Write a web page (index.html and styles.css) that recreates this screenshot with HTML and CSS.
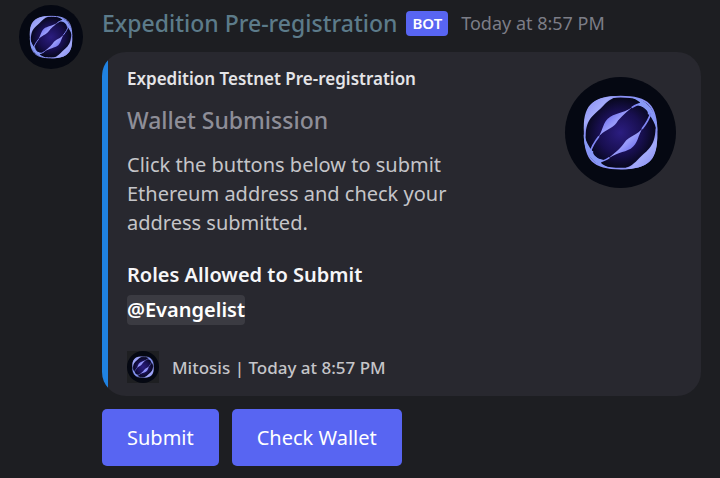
FILE: index.html
```html
<!DOCTYPE html>
<html lang="en">
<head>
    <meta charset="UTF-8">
    <meta name="viewport" content="width=device-width, initial-scale=1.0">
    <title>Expedition Pre-registration</title>
    <link rel="stylesheet" href="styles.css">
</head>
<body>
    <!-- logo, used by the avatar, thumbnail and footer -->
    <svg class="defs" aria-hidden="true">
        <defs>
            <radialGradient id="core">
                <stop offset="0" stop-color="#2b1d80" />
                <stop offset="0.6" stop-color="#180f50" />
                <stop offset="1" stop-color="#060719" />
            </radialGradient>
            <linearGradient id="band" x1="0" y1="0" x2="1" y2="1">
                <stop offset="0" stop-color="#8488ee" />
                <stop offset="0.35" stop-color="#a3aafa" />
                <stop offset="0.55" stop-color="#6a70e2" />
                <stop offset="1" stop-color="#9aaafc" />
            </linearGradient>
            <linearGradient id="leaf" x1="0" y1="0" x2="1" y2="1">
                <stop offset="0.2" stop-color="#6462ea" />
                <stop offset="0.5" stop-color="#999cfa" />
                <stop offset="0.8" stop-color="#625fe6" />
            </linearGradient>
            <g id="half">
                <path fill="url(#band)" d="M57 165 C53 88 78 56 170 57 C145 60 130 70 115 86 C103 99 92 106 80 120 C68 134 63 150 61 180 Z" />
                <path fill="url(#leaf)" d="M98 183 C116 158 112 134 136 119 C158 107 180 108 210 84 C182 108 166 120 155 137 C141 157 116 158 98 183 Z" />
                <path fill="none" stroke="#7f85f4" stroke-width="5" d="M76 226 C80 208 88 196 102 178 M200 92 C212 84 220 80 232 80 C246 81 253 92 251 112" />
                <path fill="#8798f6" d="M196 60 C240 64 276 95 277 162 C270 142 262 124 251 112 C248 98 234 88 212 84 C220 81 225 79 225 76 C218 70 208 65 196 60 Z" />
                <path fill="#0b0b30" d="M214 88 C238 86 246 98 244 122 C240 100 230 92 214 88 Z" />
            </g>
            <symbol id="logo" viewBox="0 0 333 333">
                <circle cx="166" cy="167" r="108" fill="url(#core)" />
                <path fill="none" stroke="#8b91f6" stroke-width="5" d="M167 59 C249 59 275 85 275 167 C275 249 249 275 167 275 C85 275 59 249 59 167 C59 85 85 59 167 59 Z" />
                <use href="#half" />
                <use href="#half" transform="rotate(180 166.5 167)" />
            </symbol>
        </defs>
    </svg>

    <article class="message">
        <svg class="avatar" role="img" aria-label="Mitosis"><use href="#logo" /></svg>
        <div class="content">
            <header class="header">
                <span class="username">Expedition Pre-registration</span>
                <span class="bot-tag">BOT</span>
                <time class="timestamp">Today at 8:57 PM</time>
            </header>
            <section class="embed">
                <div class="embed-body">
                    <div class="embed-text">
                        <p class="embed-author">Expedition Testnet Pre-registration</p>
                        <h2 class="embed-title">Wallet Submission</h2>
                        <p class="embed-description">Click the buttons below to submit Ethereum address and check your address submitted.</p>
                        <h3 class="field-name">Roles Allowed to Submit</h3>
                        <p class="field-value"><span class="mention">@Evangelist</span></p>
                    </div>
                    <svg class="thumbnail" role="img" aria-label="Mitosis"><use href="#logo" /></svg>
                </div>
                <footer class="embed-footer">
                    <span class="footer-icon"><svg class="footer-logo" aria-hidden="true"><use href="#logo" /></svg></span>
                    <span>Mitosis | Today at 8:57 PM</span>
                </footer>
            </section>
            <div class="buttons">
                <button type="button" class="btn">Submit</button>
                <button type="button" class="btn">Check Wallet</button>
            </div>
        </div>
    </article>
</body>
</html>
```
FILE: styles.css
```css
* {
  box-sizing: border-box;
}

body {
  margin: 0;
  background-color: #1d1e22;
  color: #c5c5c9;
  font-family: "Noto Sans", "Open Sans", sans-serif;
  font-size: 20px;
  line-height: 29px;
}

p, h2, h3 {
  margin: 0;
}

.defs {
  position: absolute;
  width: 0;
  height: 0;
}

.message {
  display: flex;
  gap: 19px;
  padding: 5px 19px 12px;
}

.avatar, .thumbnail, .footer-logo {
  display: block;
  flex: none;
  background-color: #050812;
  border-radius: 50%;
}

.avatar {
  width: 64px;
  height: 64px;
}

.content {
  flex: 1;
  min-width: 0;
}

/* Name row */
.header {
  display: flex;
  align-items: center;
  height: 36px;
}

.username {
  color: #5c7b8a;
  font-size: 23px;
  font-weight: 500;
}

.bot-tag {
  margin-left: 9px;
  padding: 0 6px;
  border-radius: 4px;
  background-color: #5865f2;
  color: #ffffff;
  font-size: 15px;
  font-weight: 600;
  line-height: 25px;
}

.timestamp {
  margin-left: 13px;
  color: #7c7d87;
  font-size: 18px;
}

/* Embed card */
.embed {
  position: relative;
  margin-top: 11px;
  padding: 12px 25px 13px;
  border-radius: 24px;
  background-color: #28282f;
  overflow: hidden;
}

.embed::before {
  content: "";
  position: absolute;
  top: 0;
  bottom: 0;
  left: 0;
  width: 6px;
  background-color: #1f82e2;
}

.embed-body {
  display: flex;
  justify-content: space-between;
}

.embed-text {
  max-width: 350px;
}

.embed-author {
  color: #e4e4e7;
  font-size: 17px;
  font-weight: 600;
}

.embed-title {
  margin-top: 13px;
  color: #8e8e98;
  font-size: 23px;
  font-weight: 500;
}

.embed-description {
  margin-top: 15px;
}

.field-name {
  margin-top: 23px;
  color: #f6f6f8;
  font-size: 20px;
  font-weight: 600;
}

.field-value {
  margin-top: 6px;
}

.mention {
  display: inline-block;
  border-radius: 4px;
  background-color: #3b3b42;
  color: #ffffff;
  font-weight: 600;
  line-height: 30px;
}

.thumbnail {
  width: 111px;
  height: 111px;
  margin-top: 13px;
}

.embed-footer {
  display: flex;
  align-items: center;
  gap: 13px;
  margin-top: 26px;
  font-size: 17px;
  font-weight: 500;
}

.footer-icon {
  background-color: #1e1f22;
}

.footer-logo {
  width: 32px;
  height: 32px;
}

/* Buttons */
.buttons {
  display: flex;
  gap: 13px;
  margin-top: 13px;
}

.btn {
  padding: 14px 25px;
  border: none;
  border-radius: 5px;
  background-color: #5865f2;
  color: #ffffff;
  font: inherit;
  cursor: pointer;
}
```
